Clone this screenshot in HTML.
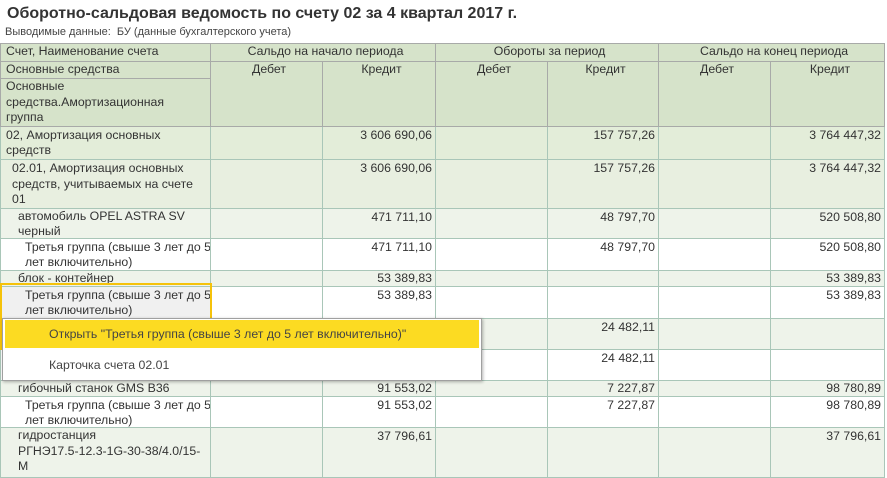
<!DOCTYPE html>
<html><head><meta charset="utf-8"><style>
body{margin:0;width:887px;height:471px;overflow:hidden;background:#fff;font-family:"Liberation Sans",Arial,sans-serif;color:#333;position:relative}
.t{position:absolute;left:7px;top:5px;font-size:16px;font-weight:bold;color:#333}
.s{position:absolute;left:5px;top:26px;font-size:11px;color:#444}
table{position:absolute;left:0;top:43px;border-collapse:collapse;table-layout:fixed;width:884px;font-size:12.3px;line-height:14.5px}
td{border:1px solid #a9c6b8;padding:0 0 0 5px;vertical-align:top;overflow:hidden;white-space:nowrap}
.h td{background:#d6e3ca;border-color:#a8aaa8}
.h td.c{text-align:center}
td.r{text-align:right;padding-right:3px;padding-top:1px}
.a td{background:#e3edd9}.b td{background:#e8efe0}.g td{background:#eef3ea}.wh td{background:#fff}
.menu{position:absolute;left:2px;top:318px;width:478px;height:61px;background:#fff;border:1px solid #a0a0a0;box-shadow:1px 1px 3px rgba(0,0,0,.3);font-size:12.3px;color:#444}
.mi{position:absolute;left:2px;width:474px;height:28px;line-height:28px;padding-left:44px;box-sizing:border-box}
.sel{position:absolute;left:0;top:283px;width:212px;height:67px;border:2px solid #f5c20a;box-sizing:border-box}
</style></head><body>
<div class="t">Оборотно-сальдовая ведомость по счету 02 за 4 квартал 2017 г.</div>
<div class="s">Выводимые данные:&nbsp; БУ (данные бухгалтерского учета)</div>
<table>
<colgroup><col style="width:210px"><col style="width:112px"><col style="width:113px"><col style="width:112px"><col style="width:111px"><col style="width:112px"><col style="width:114px"></colgroup>
<tr class="h" style="height:18px"><td>Счет, Наименование счета</td><td class="c" colspan="2">Сальдо на начало периода</td><td class="c" colspan="2">Обороты за период</td><td class="c" colspan="2">Сальдо на конец периода</td></tr>
<tr class="h" style="height:17px"><td>Основные средства</td><td class="c" rowspan="2">Дебет</td><td class="c" rowspan="2">Кредит</td><td class="c" rowspan="2">Дебет</td><td class="c" rowspan="2">Кредит</td><td class="c" rowspan="2">Дебет</td><td class="c" rowspan="2">Кредит</td></tr>
<tr class="h" style="height:48px"><td style="line-height:15.5px">Основные<br>средства.Амортизационная<br>группа</td></tr>
<tr class="a" style="height:33px"><td style="padding-top:1px">02, Амортизация основных<br>средств</td><td></td><td class="r">3 606 690,06</td><td></td><td class="r">157 757,26</td><td></td><td class="r">3 764 447,32</td></tr>
<tr class="b" style="height:49px"><td style="padding-left:11px;line-height:15.5px;padding-top:1px">02.01, Амортизация основных<br>средств, учитываемых на счете<br>01</td><td></td><td class="r">3 606 690,06</td><td></td><td class="r">157 757,26</td><td></td><td class="r">3 764 447,32</td></tr>
<tr class="g" style="height:29px"><td style="padding-left:17px">автомобиль OPEL ASTRA SV<br>черный</td><td></td><td class="r">471 711,10</td><td></td><td class="r">48 797,70</td><td></td><td class="r">520 508,80</td></tr>
<tr class="wh" style="height:32px"><td style="padding-left:24px;padding-top:1px">Третья группа (свыше 3 лет до 5<br>лет включительно)</td><td></td><td class="r">471 711,10</td><td></td><td class="r">48 797,70</td><td></td><td class="r">520 508,80</td></tr>
<tr class="g" style="height:16px"><td style="padding-left:17px">блок - контейнер</td><td></td><td class="r" style="padding-top:0">53 389,83</td><td></td><td></td><td></td><td class="r" style="padding-top:0">53 389,83</td></tr>
<tr class="wh" style="height:32px"><td style="padding-left:24px;padding-top:1px;background:#f0f0f0">Третья группа (свыше 3 лет до 5<br>лет включительно)</td><td></td><td class="r">53 389,83</td><td></td><td></td><td></td><td class="r">53 389,83</td></tr>
<tr class="g" style="height:31px"><td></td><td></td><td></td><td></td><td class="r">24 482,11</td><td></td><td></td></tr>
<tr class="wh" style="height:31px"><td></td><td></td><td></td><td></td><td class="r">24 482,11</td><td></td><td></td></tr>
<tr class="g" style="height:16px"><td style="padding-left:17px">гибочный станок GMS B36</td><td></td><td class="r" style="padding-top:0">91 553,02</td><td></td><td class="r" style="padding-top:0">7 227,87</td><td></td><td class="r" style="padding-top:0">98 780,89</td></tr>
<tr class="wh" style="height:31px"><td style="padding-left:24px;padding-top:1px">Третья группа (свыше 3 лет до 5<br>лет включительно)</td><td></td><td class="r">91 553,02</td><td></td><td class="r">7 227,87</td><td></td><td class="r">98 780,89</td></tr>
<tr class="g" style="height:50px"><td style="padding-left:17px;line-height:15.5px">гидростанция<br>РГНЭ17.5-12.3-1G-30-38/4.0/15-<br>М</td><td></td><td class="r">37 796,61</td><td></td><td></td><td></td><td class="r">37 796,61</td></tr>
</table>
<div class="sel"></div>
<div class="menu">
<div class="mi" style="top:1px;background:#fcdb22">Открыть "Третья группа (свыше 3 лет до 5 лет включительно)"</div>
<div class="mi" style="top:32px">Карточка счета 02.01</div>
</div>
</body></html>
